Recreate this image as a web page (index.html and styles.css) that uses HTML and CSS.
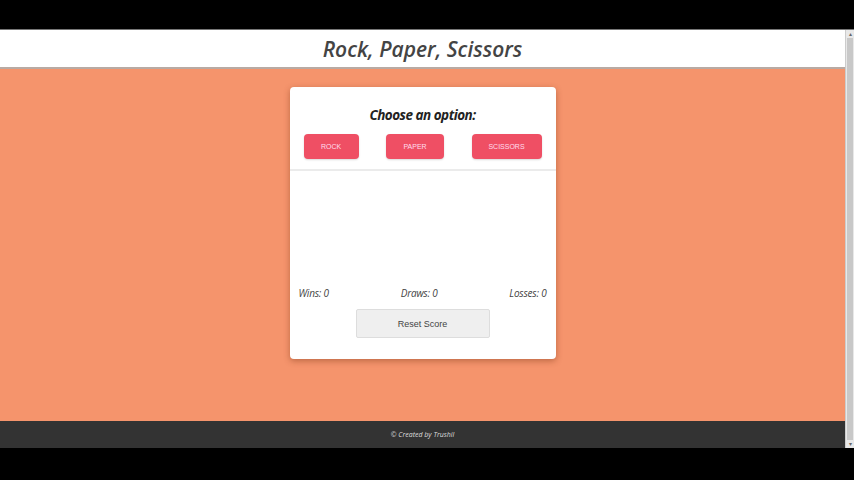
FILE: index.html
```html
<!DOCTYPE html>
<html>
<head>
<meta charset="utf-8">
<link rel="stylesheet" href="styles.css">
</head>
<body>
<div class="letterbox"></div>
<div class="viewport">
  <div class="page">
    <header class="header"><h1 class="title">Rock, Paper, Scissors</h1></header>
    <main class="main">
      <section class="card">
        <h2 class="prompt">Choose an option:</h2>
        <div class="choices">
          <button class="choice">ROCK</button>
          <button class="choice">PAPER</button>
          <button class="choice">SCISSORS</button>
        </div>
        <div class="result"></div>
        <div class="scores">
          <span class="score">Wins: 0</span>
          <span class="score">Draws: 0</span>
          <span class="score">Losses: 0</span>
        </div>
        <div class="reset-row"><button class="reset">Reset Score</button></div>
      </section>
    </main>
    <footer class="footer">© Created by Trushil</footer>
  </div>
  <div class="scrollbar"><div class="arrow">▴</div><div class="thumb"></div><div class="arrow">▾</div></div>
</div>
<div class="letterbox bottom"></div>
</body>
</html>
```
FILE: styles.css
```css
html, body { margin: 0; padding: 0; background: #000; }
body { width: 854px; height: 480px; overflow: hidden; font-family: "Open Sans", sans-serif; }
.letterbox { height: 29px; background: #000; }
.letterbox.bottom { height: 32px; }
.viewport { display: flex; height: 418px; border-top: 1px solid #777; }
.page { flex: 1; display: flex; flex-direction: column; background: #f5946c; }
.header { height: 37px; background: #fff; border-bottom: 2px solid #b9aaa3; display: flex; align-items: center; justify-content: center; }
.title { margin: 0; font-size: 21px; font-style: italic; font-weight: 600; color: #444; letter-spacing: 0; }
.main { flex: 1; display: flex; justify-content: center; align-items: flex-start; padding-top: 18px; }
.card { width: 266px; height: 272px; background: #fff; border-radius: 4px; box-shadow: 0 2px 6px rgba(120,50,20,0.45); display: flex; flex-direction: column; }
.prompt { margin: 19px 0 0; text-align: center; font-size: 13.5px; letter-spacing: -0.5px; font-style: italic; font-weight: 700; color: #222; line-height: 18px; }
.choices { display: flex; justify-content: space-between; padding: 10px 14px 0 14px; }
.choice { height: 25px; border: none; border-radius: 4px; background: #ef4f64; color: #fde; font-family: "Liberation Sans", sans-serif; font-size: 7px; padding: 0; box-shadow: 0 1px 2px rgba(0,0,0,0.15); }
.choice:nth-child(1) { width: 55px; }
.choice:nth-child(2) { width: 58px; }
.choice:nth-child(3) { width: 70px; }
.result { height: 115px; margin-top: 10px; border-top: 2px solid #ebebeb; }
.scores { display: flex; justify-content: space-between; padding: 0 9px; font-size: 10px; font-style: italic; color: #444; line-height: 14px; letter-spacing: -0.2px; }
.reset-row { display: flex; justify-content: center; padding-top: 9px; }
.reset { width: 134px; height: 29px; background: #efefef; border: 1px solid #ddd; border-radius: 2px; font-family: "Liberation Sans", sans-serif; font-size: 9px; color: #444; }
.footer { height: 27px; background: #333; color: #ddd; font-size: 7px; font-style: italic; display: flex; align-items: center; justify-content: center; }
.scrollbar { width: 8px; background: #e8e8e8; display: flex; flex-direction: column; border-left: 1px solid #ccc; }
.arrow { height: 8px; font-size: 6px; line-height: 8px; text-align: center; color: #666; }
.thumb { flex: 1; background: #c8c8c8; margin: 0 1px; }
```
